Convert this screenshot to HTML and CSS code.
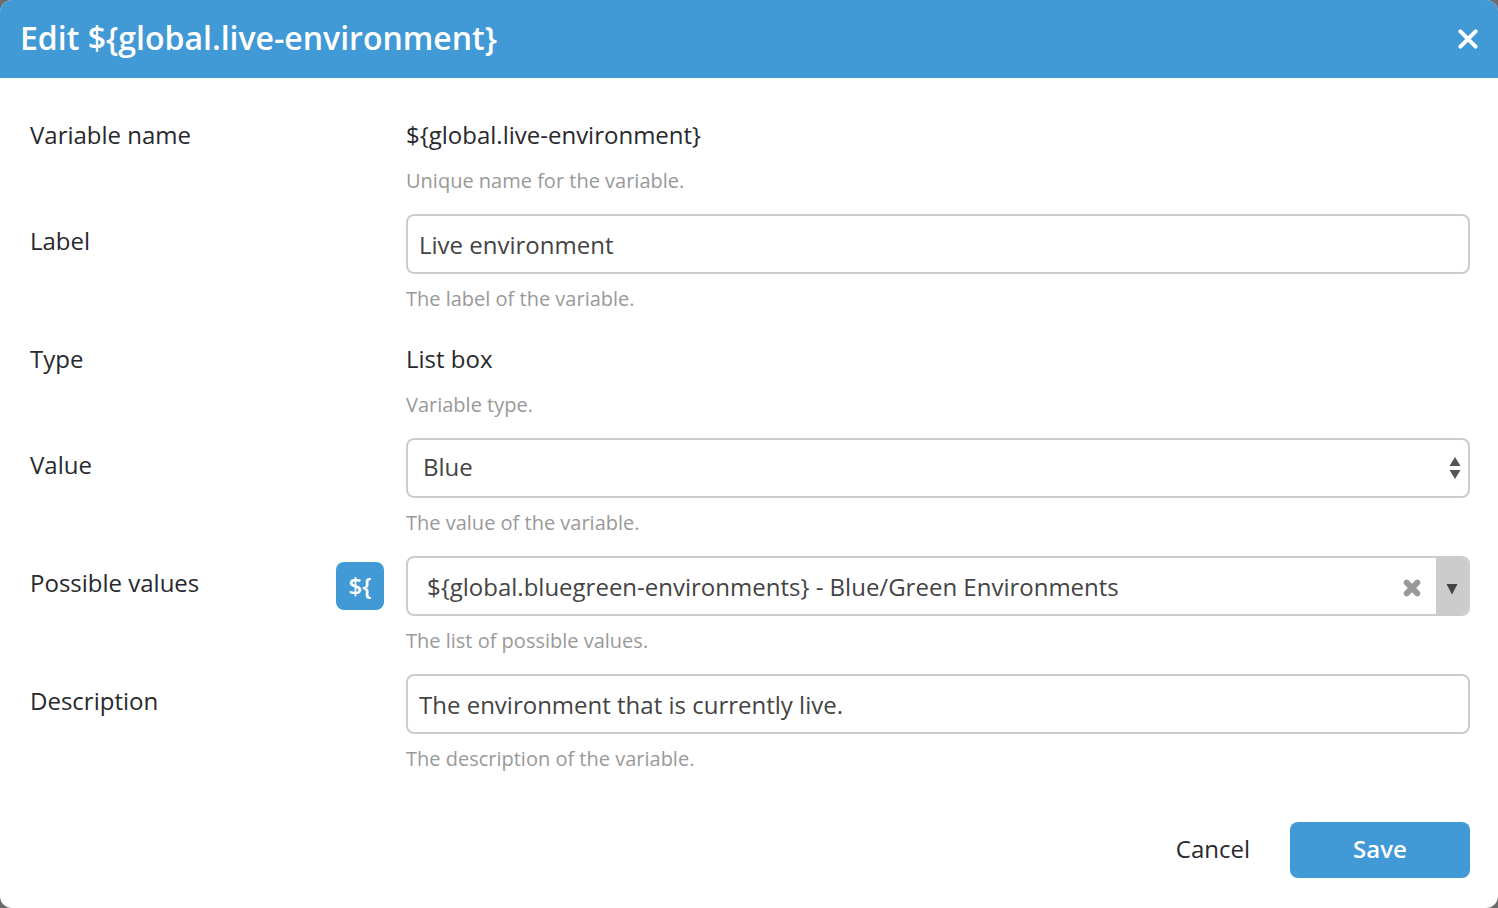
FILE: index.html
```
<!DOCTYPE html>
<html lang="en">
<head>
<meta charset="utf-8">
<title>Edit variable</title>
<link rel="stylesheet" href="styles.css">
</head>
<body>
<form class="dialog">
  <header class="dialog-header">
    <h1 class="dialog-title">Edit ${global.live-environment}</h1>
    <button class="close" type="button" aria-label="Close">
      <svg class="close-icon" viewBox="0 0 20 20"><path d="M2.4 2.4L17.6 17.6M17.6 2.4L2.4 17.6" fill="none" stroke="currentColor" stroke-width="4" stroke-linecap="round"/></svg>
    </button>
  </header>
  <main class="fields">
    <div class="row">
      <div class="label">Variable name</div>
      <div class="control">
        <div class="static">${global.live-environment}</div>
        <p class="help">Unique name for the variable.</p>
      </div>
    </div>
    <div class="row">
      <label class="label" for="label">Label</label>
      <div class="control">
        <input class="box" id="label" type="text" value="Live environment">
        <p class="help">The label of the variable.</p>
      </div>
    </div>
    <div class="row">
      <div class="label">Type</div>
      <div class="control">
        <div class="static">List box</div>
        <p class="help">Variable type.</p>
      </div>
    </div>
    <div class="row">
      <label class="label" for="value">Value</label>
      <div class="control">
        <div class="select-wrap">
          <select class="box select" id="value"><option>Blue</option><option>Green</option></select>
          <svg class="select-arrows" viewBox="0 0 12 22"><path d="M6 0L11.5 9H0.5ZM0.5 13H11.5L6 22Z" fill="currentColor"/></svg>
        </div>
        <p class="help">The value of the variable.</p>
      </div>
    </div>
    <div class="row">
      <div class="label label-split">
        <label class="label-text" for="possible">Possible values</label>
        <button class="variable-toggle" type="button">${</button>
      </div>
      <div class="control">
        <div class="box combo">
          <input class="combo-input" id="possible" type="text" value="${global.bluegreen-environments} - Blue/Green Environments">
          <button class="clear" type="button" aria-label="Clear">
            <svg class="clear-icon" viewBox="0 0 18 18"><path d="M3.7 3.7L14.3 14.3M14.3 3.7L3.7 14.3" fill="none" stroke="currentColor" stroke-width="6" stroke-linecap="round"/></svg>
          </button>
          <button class="open" type="button" aria-label="Show values">
            <svg class="open-icon" viewBox="0 0 12 12"><path d="M0.5 1H11.5L6 11.5Z" fill="currentColor"/></svg>
          </button>
        </div>
        <p class="help">The list of possible values.</p>
      </div>
    </div>
    <div class="row">
      <label class="label" for="description">Description</label>
      <div class="control">
        <input class="box" id="description" type="text" value="The environment that is currently live.">
        <p class="help">The description of the variable.</p>
      </div>
    </div>
  </main>
  <footer class="actions">
    <button class="button" type="button">Cancel</button>
    <button class="button button-primary" type="submit">Save</button>
  </footer>
</form>
</body>
</html>
```
FILE: styles.css
```
* { box-sizing: border-box; }
body {
  margin: 0;
  background: #6b6b6b;
  color: #27292d;
  font: 24px/34px "Open Sans", sans-serif;
}
button, input, select { font: inherit; color: inherit; }
button { border: 0; padding: 0; background: none; cursor: pointer; }
svg { display: block; }

.dialog {
  min-height: 100vh;
  display: flex;
  flex-direction: column;
  overflow: hidden;
  border-radius: 12px;
  background: #fff;
}
.dialog-header {
  display: flex;
  align-items: center;
  justify-content: space-between;
  padding: 16px 20px 18px;
  background: #4199d6;
  color: #fff;
}
.dialog-title { margin: 0; font-size: 32px; font-weight: 600; line-height: 44px; }
.close { padding-top: 2px; }
.close-icon { width: 20px; height: 20px; }

.fields { padding: 30px 28px 0 30px; }
.row { display: grid; grid-template-columns: 354px 1fr; column-gap: 22px; }
.label { padding-top: 10px; }
.label-split { display: flex; justify-content: space-between; align-items: flex-start; padding-top: 6px; }
.label-text { padding-top: 4px; }
.static { height: 48px; padding-top: 10px; }
.help {
  margin: 10px 0 18px;
  color: #999;
  font-size: 20px;
  line-height: 30px;
}
.box {
  display: block;
  width: 100%;
  height: 60px;
  padding: 0 11px;
  border: 2px solid #ccc;
  border-radius: 8px;
  background: #fff;
  color: #444;
}
.select-wrap { position: relative; }
.select { appearance: none; padding: 0 30px 2px 15px; }
.select-arrows {
  position: absolute;
  top: 19px;
  right: 9px;
  width: 12px;
  height: 22px;
  color: #555;
  pointer-events: none;
}
.combo { display: flex; padding: 0; overflow: hidden; }
.combo-input { flex: 1; min-width: 0; border: 0; padding: 2px 0 0 19px; background: none; outline: 0; }
.clear { width: 48px; padding: 4px 0 0 15px; color: #999; }
.clear-icon { width: 18px; height: 18px; }
.open { display: grid; place-items: center; width: 32px; padding-top: 6px; background: #ccc; color: #444; }
.open-icon { width: 12px; height: 12px; }
.variable-toggle {
  width: 48px;
  height: 48px;
  border-radius: 8px;
  background: #4199d6;
  color: #fff;
  font-weight: 600;
}
.actions { display: flex; justify-content: flex-end; padding: 30px 28px; }
.button { height: 56px; padding: 0 40px 2px; border-radius: 8px; }
.button-primary { width: 180px; background: #4199d6; color: #fff; font-weight: 600; }
```
